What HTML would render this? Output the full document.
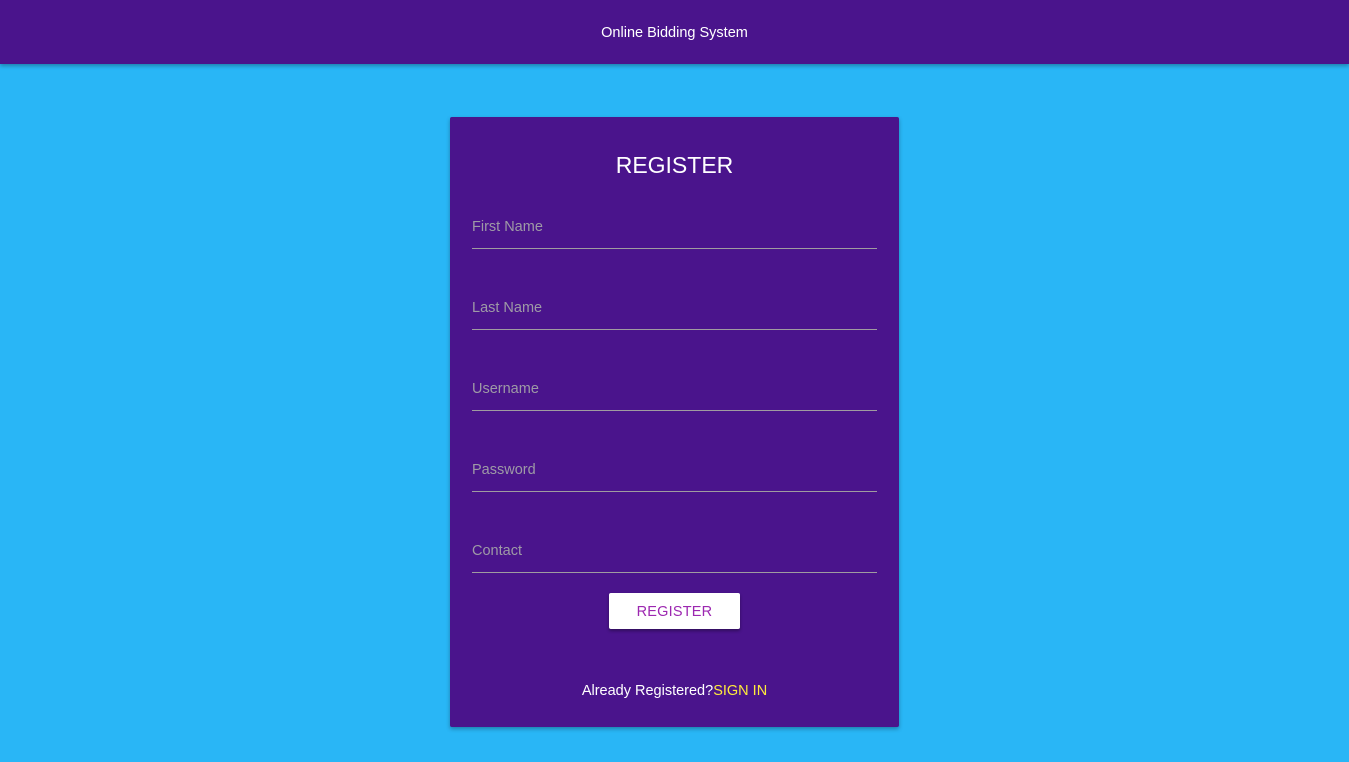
<!DOCTYPE html>
<html><head><meta charset="utf-8"><style>
*{margin:0;padding:0;box-sizing:border-box}
body{width:1349px;height:762px;background:#29b6f6;font-family:"Liberation Sans",sans-serif;position:relative;overflow:hidden}
.hdr{position:absolute;left:0;top:0;width:1349px;height:64px;background:#4a148c;box-shadow:0 2px 4px rgba(0,0,0,.3);color:#fff;font-size:14.5px;text-align:center;line-height:67px}
.card{position:absolute;left:450px;top:117px;width:449px;height:610px;background:#4a148c;border-radius:2px;box-shadow:0 2px 4px rgba(0,0,0,.3)}
h1{position:absolute;left:0;width:100%;top:35px;text-align:center;color:#fff;font-weight:normal;font-size:23px}
.f{position:absolute;left:22px;width:405px;height:1px;background:#a09ca0}
.l{position:absolute;left:22px;color:#9e9aa6;font-size:14.5px}
.btn{position:absolute;left:159px;top:476px;width:131px;height:36px;background:#fff;border-radius:2px;box-shadow:0 2px 3px rgba(0,0,0,.35);color:#9c27b0;font-size:14.5px;text-align:center;line-height:38px;letter-spacing:.2px}
.s{position:absolute;left:0;width:100%;top:566px;text-align:center;color:#fff;font-size:14.5px}
.s span{color:#ffeb3b}
</style></head><body>
<div class="hdr">Online Bidding System</div>
<div class="card">
<h1>REGISTER</h1>
<div class="l" style="top:102px">First Name</div><div class="f" style="top:131px"></div>
<div class="l" style="top:183px">Last Name</div><div class="f" style="top:212px"></div>
<div class="l" style="top:264px">Username</div><div class="f" style="top:293px"></div>
<div class="l" style="top:345px">Password</div><div class="f" style="top:374px"></div>
<div class="l" style="top:426px">Contact</div><div class="f" style="top:455px"></div>
<div class="btn">REGISTER</div>
<div class="s">Already Registered?<span>SIGN IN</span></div>
</div>
</body></html>
